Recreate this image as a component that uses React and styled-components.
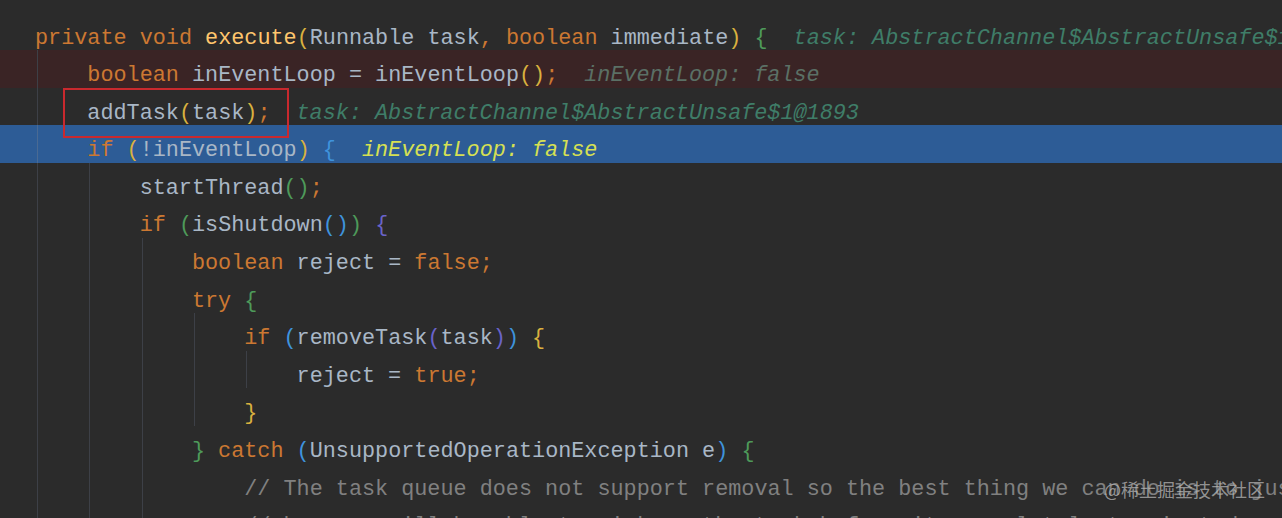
import React from "react";
import styled, { createGlobalStyle } from "styled-components";

const Global = createGlobalStyle`
  html, body { margin: 0; padding: 0; background: #2b2b2b; }
  #root { width: 1282px; height: 518px; }
`;

const Editor = styled.div`
  position: relative;
  width: 1282px;
  height: 518px;
  overflow: hidden;
  background: #2b2b2b;
  padding-top: 12.5px;
  box-sizing: border-box;
  font-family: "Liberation Mono", "DejaVu Sans Mono", monospace;
  font-size: 21.8px;
  color: #a9b7c6;
`;

const Row = styled.div`
  display: flex;
  align-items: flex-start;
  height: 37.6px;
  padding-left: 35px;
  white-space: pre;
  background: ${(p) =>
    p.$tone === "error" ? "#3a2425" : p.$tone === "current" ? "#2d5c96" : "transparent"};
`;

const Indent = styled.span`
  flex: none;
  width: 4ch;
  height: 37.6px;
  background: ${(p) =>
    p.$guide
      ? `linear-gradient(to right, transparent 2px, ${p.$light ? "#4a6a93" : "#3d4047"} 2px, ${p.$light ? "#4a6a93" : "#3d4047"} 3px, transparent 3px)`
      : "none"};
`;

const Code = styled.span`
  flex: none;
  line-height: 24px;
  padding-top: 14px;
`;

const colors = {
  plain: "#a9b7c6",
  kw: "#cc7832",
  fn: "#ffc66d",
  punct: "#cc7832",
  comment: "#808080",
  by: "#d9b13f",
  bg: "#4e9a5a",
  bb: "#3f93dc",
  bp: "#6a63c9",
};

const Tok = styled.span`
  color: ${(p) => colors[p.$k] || colors.plain};
`;

const hintColors = {
  normal: "#3f7d68",
  error: "#5b7065",
  current: "#d6e053",
};

const Hint = styled.span`
  margin-left: 26px;
  font-style: italic;
  color: ${(p) => hintColors[p.$tone] || hintColors.normal};
`;

const Marked = styled.span`
  position: relative;
  display: inline-block;
  &::after {
    content: "";
    position: absolute;
    left: -24px;
    right: -19px;
    top: -14px;
    bottom: -12px;
    border: 2px solid #c9292e;
  }
`;

const Watermark = styled.div`
  position: absolute;
  right: 17px;
  bottom: 17px;
  font-family: "Noto Sans CJK SC", "Noto Sans", sans-serif;
  font-size: 18px;
  line-height: 24px;
  color: rgba(225, 225, 225, 0.62);
  text-shadow: 0 0 1px rgba(0, 0, 0, 0.4);
  white-space: nowrap;
`;

const lines = [
  {
    guides: [],
    toks: [
      ["private ", "kw"], ["void ", "kw"], ["execute", "fn"], ["(", "by"],
      ["Runnable task"], [",", "punct"], [" boolean ", "kw"], ["immediate"],
      [")", "by"], [" "], ["{", "bg"],
    ],
    hint: "task: AbstractChannel$AbstractUnsafe$1@1893",
  },
  {
    tone: "error",
    guides: [1],
    toks: [["boolean ", "kw"], ["inEventLoop = inEventLoop"], ["()", "by"], [";", "punct"]],
    hint: "inEventLoop: false",
  },
  {
    guides: [1],
    marked: [["addTask"], ["(", "by"], ["task"], [")", "by"], [";", "punct"]],
    hint: "task: AbstractChannel$AbstractUnsafe$1@1893",
  },
  {
    tone: "current",
    guides: [1],
    toks: [["if ", "kw"], ["(", "by"], ["!inEventLoop"], [")", "by"], [" "], ["{", "bb"]],
    hint: "inEventLoop: false",
  },
  { guides: [1, 1], toks: [["startThread"], ["()", "bg"], [";", "punct"]] },
  {
    guides: [1, 1],
    toks: [["if ", "kw"], ["(", "bg"], ["isShutdown"], ["()", "bb"], [")", "bg"], [" "], ["{", "bp"]],
  },
  { guides: [1, 1, 1], toks: [["boolean ", "kw"], ["reject = "], ["false", "kw"], [";", "punct"]] },
  { guides: [1, 1, 1], toks: [["try ", "kw"], ["{", "bg"]] },
  {
    guides: [1, 1, 1, 1],
    toks: [
      ["if ", "kw"], ["(", "bb"], ["removeTask"], ["(", "bp"], ["task"], [")", "bp"],
      [")", "bb"], [" "], ["{", "by"],
    ],
  },
  { guides: [1, 1, 1, 1, 1], toks: [["reject = "], ["true", "kw"], [";", "punct"]] },
  { guides: [1, 1, 1, 1], toks: [["}", "by"]] },
  {
    guides: [1, 1, 1],
    toks: [
      ["}", "bg"], [" catch ", "kw"], ["(", "bb"], ["UnsupportedOperationException e"],
      [")", "bb"], [" "], ["{", "bg"],
    ],
  },
  {
    guides: [1, 1, 1, 0],
    toks: [["// The task queue does not support removal so the best thing we can do is to just move on and", "comment"]],
  },
  {
    guides: [1, 1, 1, 0],
    toks: [["// hope we will be able to pick-up the task before its completely terminated.", "comment"]],
  },
];

const renderToks = (toks) =>
  toks.map(([t, k], i) => (
    <Tok key={i} $k={k}>
      {t}
    </Tok>
  ));

export default function App() {
  return (
    <>
      <Global />
      <Editor>
        {lines.map((line, i) => (
          <Row key={i} $tone={line.tone}>
            {line.guides.map((g, j) => (
              <Indent key={j} $guide={!!g} $light={line.tone === "current"} />
            ))}
            <Code>
              {line.toks && renderToks(line.toks)}
              {line.marked && <Marked>{renderToks(line.marked)}</Marked>}
              {line.hint && <Hint $tone={line.tone || "normal"}>{line.hint}</Hint>}
            </Code>
          </Row>
        ))}
        <Watermark>@稀土掘金技术社区</Watermark>
      </Editor>
    </>
  );
}
